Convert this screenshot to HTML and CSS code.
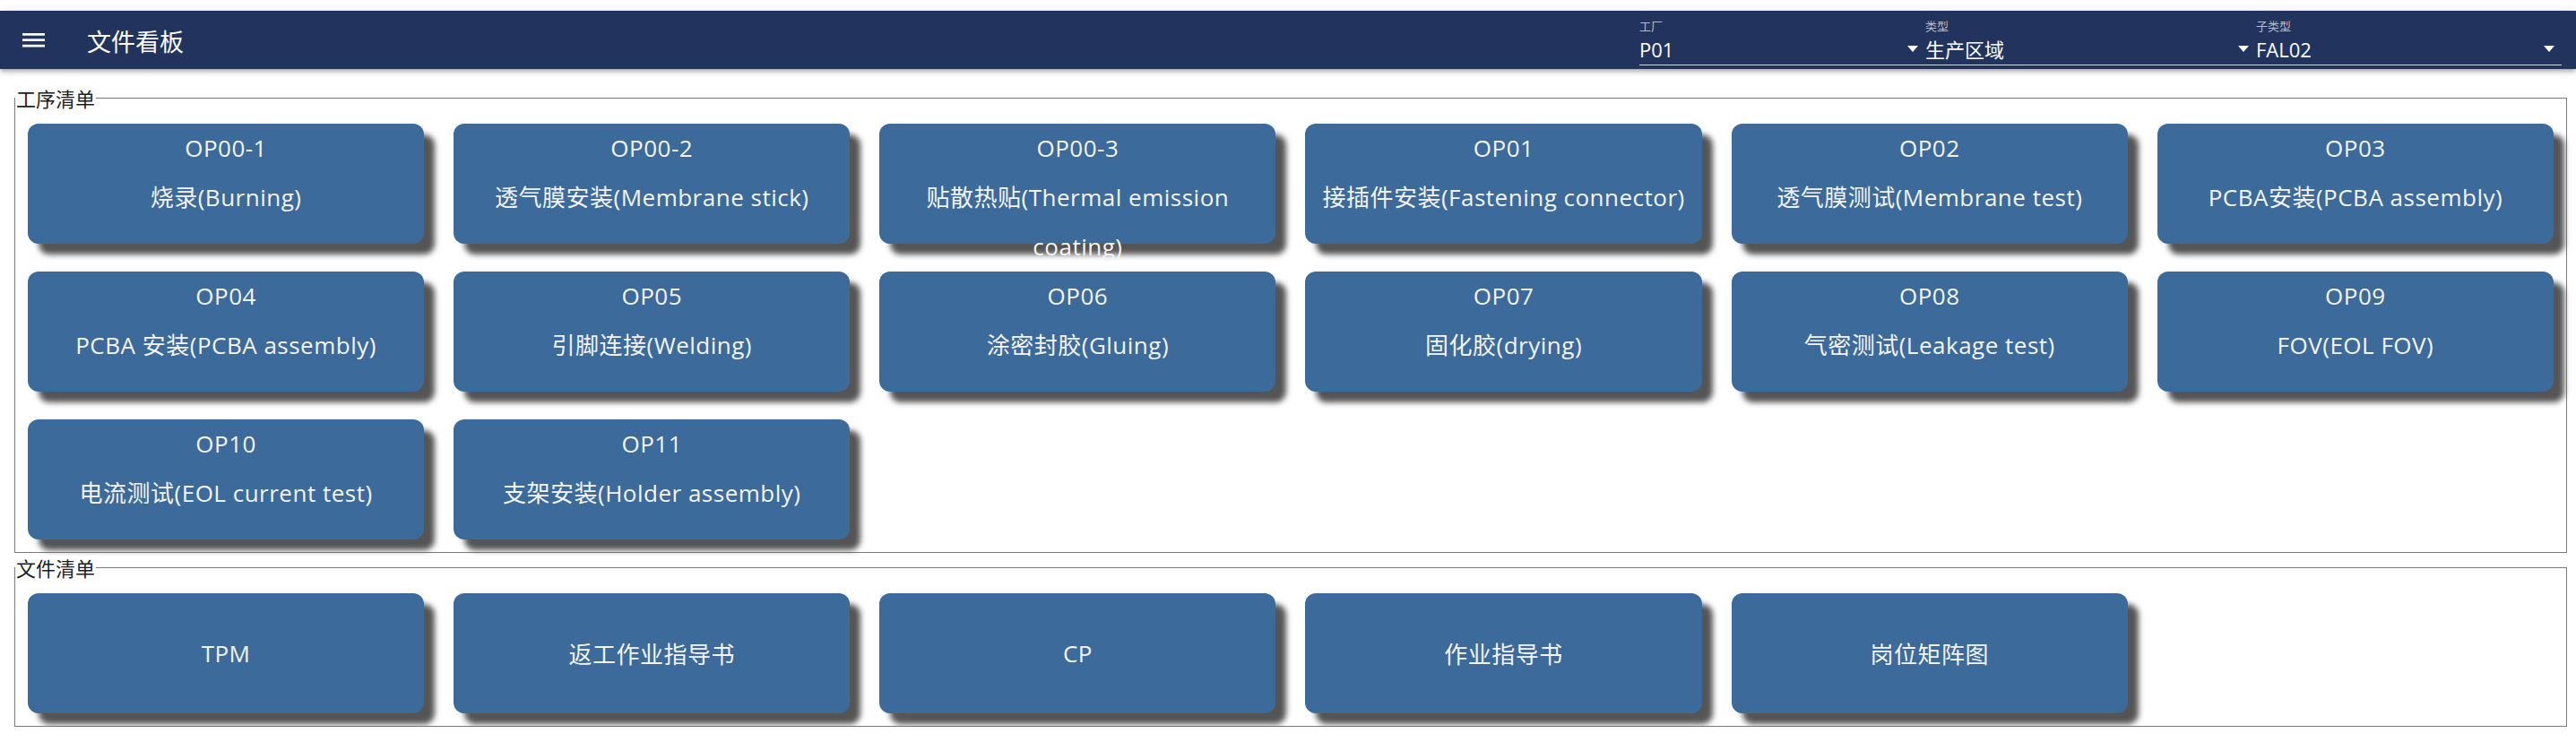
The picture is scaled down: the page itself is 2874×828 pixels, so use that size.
FILE: index.html
```html
<!DOCTYPE html>
<html lang="zh-CN">
<head>
<meta charset="utf-8">
<title>文件看板</title>
<link rel="stylesheet" href="styles.css">
</head>
<body>
<header class="appbar">
  <span class="menu-btn">
    <svg width="25" height="16" viewBox="0 0 25 16"><rect x="0" y="0" width="25" height="2.7" fill="#fff"/><rect x="0" y="6.3" width="25" height="2.7" fill="#fff"/><rect x="0" y="12.8" width="25" height="2.7" fill="#fff"/></svg>
  </span>
  <h1 class="title">文件看板</h1>
  <div class="filters">
    <div class="select sel-factory">
      <span class="select-label">工厂</span>
      <div class="select-value"><span>P01</span><i class="caret"></i></div>
    </div>
    <div class="select sel-type">
      <span class="select-label">类型</span>
      <div class="select-value"><span>生产区域</span><i class="caret"></i></div>
    </div>
    <div class="select sel-subtype">
      <span class="select-label">子类型</span>
      <div class="select-value"><span>FAL02</span><i class="caret"></i></div>
    </div>
  </div>
</header>
<main class="content">
  <fieldset class="group group-ops">
    <legend>工序清单</legend>
    <div class="card-grid">
      <div class="card op"><div>OP00-1</div><div>烧录(Burning)</div></div>
      <div class="card op"><div>OP00-2</div><div>透气膜安装(Membrane stick)</div></div>
      <div class="card op"><div>OP00-3</div><div>贴散热贴(Thermal emission coating)</div></div>
      <div class="card op"><div>OP01</div><div>接插件安装(Fastening connector)</div></div>
      <div class="card op"><div>OP02</div><div>透气膜测试(Membrane test)</div></div>
      <div class="card op"><div>OP03</div><div>PCBA安装(PCBA assembly)</div></div>
      <div class="card op"><div>OP04</div><div>PCBA 安装(PCBA assembly)</div></div>
      <div class="card op"><div>OP05</div><div>引脚连接(Welding)</div></div>
      <div class="card op"><div>OP06</div><div>涂密封胶(Gluing)</div></div>
      <div class="card op"><div>OP07</div><div>固化胶(drying)</div></div>
      <div class="card op"><div>OP08</div><div>气密测试(Leakage test)</div></div>
      <div class="card op"><div>OP09</div><div>FOV(EOL FOV)</div></div>
      <div class="card op"><div>OP10</div><div>电流测试(EOL current test)</div></div>
      <div class="card op"><div>OP11</div><div>支架安装(Holder assembly)</div></div>
    </div>
  </fieldset>
  <fieldset class="group group-docs">
    <legend>文件清单</legend>
    <div class="card-grid">
      <div class="card doc">TPM</div>
      <div class="card doc">返工作业指导书</div>
      <div class="card doc">CP</div>
      <div class="card doc">作业指导书</div>
      <div class="card doc">岗位矩阵图</div>
    </div>
  </fieldset>
</main>
</body>
</html>
```
FILE: styles.css
```css
html, body {
  margin: 0;
  padding: 0;
  background: #ffffff;
}
body {
  font-family: "Open Sans", "Noto Sans CJK SC", sans-serif;
  color: #222;
}
.appbar {
  margin-top: 12px;
  height: 65px;
  background: #22345e;
  display: flex;
  align-items: stretch;
  padding: 0 16px 0 25px;
  box-shadow: 0 2px 4px -1px rgba(0,0,0,.2), 0 4px 5px 0 rgba(0,0,0,.14), 0 1px 10px 0 rgba(0,0,0,.12);
  position: relative;
  z-index: 2;
}
.menu-btn {
  display: flex;
  align-items: flex-start;
  padding-top: 25px;
  width: 25px;
}
.menu-btn svg { display: block; }
.title {
  margin: 0 0 0 47px;
  font-family: "Noto Sans CJK SC", sans-serif;
  font-weight: 400;
  font-size: 27px;
  color: #fff;
  display: flex;
  align-items: center;
  padding-top: 1px;
}
.filters {
  margin-left: auto;
  display: flex;
}
.select {
  display: flex;
  flex-direction: column;
  padding-top: 8px;
}
.sel-factory { width: 319px; }
.sel-type { width: 369px; }
.sel-subtype { width: 341px; }
.select-label {
  font-family: "Noto Sans CJK SC", sans-serif;
  font-size: 13px;
  line-height: 18px;
  height: 18px;
  color: #b4bdd0;
}
.select-value {
  display: flex;
  align-items: center;
  justify-content: space-between;
  height: 34px;
  line-height: 34px;
  font-size: 22px;
  color: #fff;
  border-bottom: 1px solid #cdd7ea;
}
.caret {
  width: 0;
  height: 0;
  border-left: 6px solid transparent;
  border-right: 6px solid transparent;
  border-top: 7px solid #fff;
  margin-right: 8px;
  margin-top: -2px;
}
.content {
  padding: 0 10px 0 16px;
}
.group {
  margin: 0;
  padding: 0;
  border: 1px solid #7a7a7a;
  min-width: 0;
}
.group-ops { margin-top: 18px; }
.group-docs { margin-top: 2px; }
.group legend {
  padding: 0 1px;
  margin: 0;
  font-size: 22px;
  line-height: 28px;
  color: #1e1e1e;
  font-family: "Noto Sans CJK SC", sans-serif;
}
.card-grid {
  display: grid;
  grid-template-columns: repeat(6, 1fr);
  column-gap: 33px;
  row-gap: 31px;
  padding: 15px 14px 14px 14px;
}
.card {
  height: 134px;
  box-sizing: border-box;
  background: #3b6a9b;
  border-radius: 12px;
  box-shadow: 12px 12px 6px #555555;
  color: #f4f4f4;
  font-size: 26px;
  letter-spacing: 0.5px;
  text-align: center;
  padding: 0 8px;
}
.card.op {
  line-height: 55px;
}
.card.doc {
  display: flex;
  align-items: center;
  justify-content: center;
}
```
